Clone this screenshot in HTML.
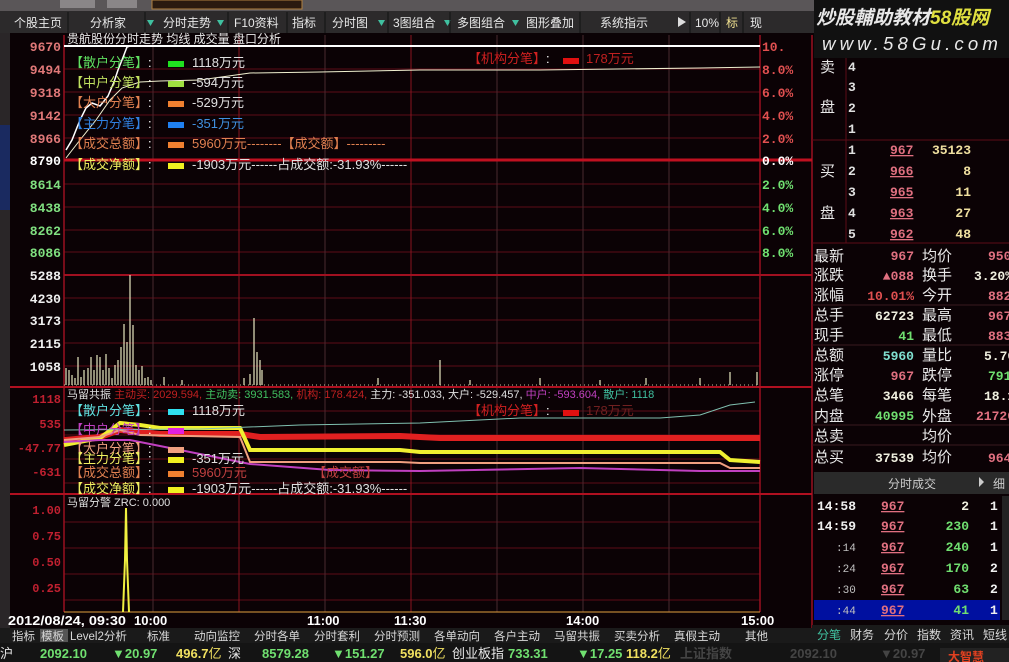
<!DOCTYPE html>
<html><head><meta charset="utf-8"><style>
html,body{margin:0;padding:0;background:#0b0205;width:1009px;height:662px;overflow:hidden}
svg{display:block;font-family:"Liberation Sans","Noto Sans CJK SC",sans-serif}
.m{font-family:"Liberation Mono","Noto Sans CJK SC",monospace}
</style></head><body>
<svg width="1009" height="662" viewBox="0 0 1009 662" xmlns="http://www.w3.org/2000/svg">
<rect width="1009" height="662" fill="#0b0205"/>
<rect x="0" y="0" width="820" height="11" fill="#5a5658"/>
<rect x="60" y="0" width="35" height="8" fill="#8a8688"/>
<rect x="107" y="0" width="30" height="8" fill="#8a8688"/>
<rect x="152" y="0" width="150" height="9" fill="#2a1a10" stroke="#b08040"/>
<rect x="0" y="11" width="820" height="22" fill="#2c2a2b"/>
<g font-size="12" fill="#e8e8e8">
<text x="14" y="27">个股主页</text><text x="90" y="27">分析家</text>
<text x="163" y="27">分时走势</text><text x="234" y="27">F10资料</text>
<text x="292" y="27">指标</text><text x="332" y="27">分时图</text>
<text x="393" y="27">3图组合</text><text x="457" y="27">多图组合</text>
<text x="526" y="27">图形叠加</text><text x="600" y="27">系统指示</text>
<text x="695" y="27">10%</text><text x="726" y="27" fill="#f0e090">标</text><text x="750" y="27">现</text>
</g>
<g fill="#40c0a0"><path d="M147 20h7l-3.5 6z"/><path d="M217 20h7l-3.5 6z"/><path d="M378 20h7l-3.5 6z"/><path d="M444 20h7l-3.5 6z"/><path d="M512 20h7l-3.5 6z"/></g>
<path d="M678 17v10l8-5z" fill="#ddd"/>
<g stroke="#111"><line x1="68" y1="12" x2="68" y2="33"/><line x1="145" y1="12" x2="145" y2="33"/><line x1="228" y1="12" x2="228" y2="33"/><line x1="287" y1="12" x2="287" y2="33"/><line x1="325" y1="12" x2="325" y2="33"/><line x1="388" y1="12" x2="388" y2="33"/><line x1="450" y1="12" x2="450" y2="33"/><line x1="580" y1="12" x2="580" y2="33"/><line x1="690" y1="12" x2="690" y2="33"/><line x1="720" y1="12" x2="720" y2="33"/><line x1="743" y1="12" x2="743" y2="33"/></g>
<rect x="0" y="33" width="10" height="600" fill="#2a2628"/>
<rect x="0" y="125" width="10" height="85" fill="#1a2a60"/>
<rect x="814" y="0" width="195" height="58" fill="#111"/>
<text x="816" y="24" font-size="19" font-style="italic" fill="#e8e8e8" font-weight="bold">炒股輔助教材<tspan fill="#e0e040">58股网</tspan></text>
<text x="822" y="50" font-size="18" font-style="italic" fill="#e8e8e8" letter-spacing="4" textLength="180" lengthAdjust="spacingAndGlyphs">www.58Gu.com</text>
<g stroke="#5c0c18" stroke-width="1">
<line x1="64" y1="69" x2="760" y2="69"/><line x1="64" y1="92" x2="760" y2="92"/><line x1="64" y1="115" x2="760" y2="115"/><line x1="64" y1="138" x2="760" y2="138"/>
<line x1="64" y1="184" x2="760" y2="184"/><line x1="64" y1="207" x2="760" y2="207"/><line x1="64" y1="230" x2="760" y2="230"/><line x1="64" y1="252" x2="760" y2="252"/>
<line x1="64" y1="298" x2="760" y2="298"/><line x1="64" y1="320" x2="760" y2="320"/><line x1="64" y1="343" x2="760" y2="343"/><line x1="64" y1="366" x2="760" y2="366"/>
<line x1="64" y1="411" x2="760" y2="411"/><line x1="64" y1="435" x2="760" y2="435"/><line x1="64" y1="459" x2="760" y2="459"/><line x1="64" y1="483" x2="760" y2="483"/>
<line x1="64" y1="522" x2="760" y2="522"/><line x1="64" y1="548" x2="760" y2="548"/><line x1="64" y1="574" x2="760" y2="574"/><line x1="64" y1="600" x2="760" y2="600"/>
</g>
<g stroke="#4a2a30"><line x1="153" y1="35" x2="153" y2="612"/><line x1="325" y1="35" x2="325" y2="612"/><line x1="497" y1="35" x2="497" y2="612"/><line x1="583" y1="35" x2="583" y2="612"/><line x1="669" y1="35" x2="669" y2="612"/></g>
<g stroke="#8a1420"><line x1="239" y1="35" x2="239" y2="612"/><line x1="411" y1="35" x2="411" y2="612"/></g>
<g stroke="#9a1020" stroke-width="1.5"><line x1="64" y1="35" x2="64" y2="612"/><line x1="760" y1="35" x2="760" y2="612"/><line x1="812" y1="35" x2="812" y2="662"/></g>
<line x1="64" y1="160" x2="812" y2="160" stroke="#c01020" stroke-width="3"/>
<line x1="64" y1="275" x2="812" y2="275" stroke="#a01020" stroke-width="2"/>
<line x1="10" y1="387" x2="812" y2="387" stroke="#b01020" stroke-width="2"/>
<line x1="10" y1="494" x2="812" y2="494" stroke="#b01020" stroke-width="2"/>
<line x1="64" y1="612" x2="760" y2="612" stroke="#e0a040"/>
<g font-size="13" font-weight="bold" text-anchor="end" class="m">
<g fill="#e07878"><text x="61" y="51">9670</text><text x="61" y="74">9494</text><text x="61" y="97">9318</text><text x="61" y="120">9142</text><text x="61" y="143">8966</text></g>
<text x="61" y="165" fill="#fff">8790</text>
<g fill="#80e080"><text x="61" y="189">8614</text><text x="61" y="212">8438</text><text x="61" y="235">8262</text><text x="61" y="257">8086</text></g>
<g fill="#f0f0f0"><text x="61" y="280">5288</text><text x="61" y="303">4230</text><text x="61" y="325">3173</text><text x="61" y="348">2115</text><text x="61" y="371">1058</text></g>
<g fill="#c02030" font-size="12"><text x="61" y="403">1118</text><text x="61" y="428">535</text><text x="61" y="452">-47.77</text><text x="61" y="476">-631</text><text x="61" y="514">1.00</text><text x="61" y="540">0.75</text><text x="61" y="566">0.50</text><text x="61" y="592">0.25</text></g>
</g>
<g font-size="13" font-weight="bold" class="m">
<g fill="#e05050"><text x="762" y="51">10.</text><text x="762" y="74">8.0%</text><text x="762" y="97">6.0%</text><text x="762" y="120">4.0%</text><text x="762" y="143">2.0%</text></g>
<text x="762" y="165" fill="#fff">0.0%</text>
<g fill="#70e070"><text x="762" y="189">2.0%</text><text x="762" y="212">4.0%</text><text x="762" y="235">6.0%</text><text x="762" y="257">8.0%</text></g>
</g>
<line x1="64" y1="46" x2="760" y2="46" stroke="#fff" stroke-width="2"/>
<polyline fill="none" stroke="#fff" stroke-width="1.5" points="66,150 72,140 80,120 86,108 92,103 100,106 108,96 114,82 118,70 122,60 127,47 130,46"/>
<polyline fill="none" stroke="#f0f0d0" stroke-width="1" points="66,158 80,140 96,120 110,100 122,88 140,82 160,81 200,80 250,73 320,72 420,70 540,70 700,68 760,67"/>
<g stroke="#e8e8c0" stroke-width="1.2">
<line x1="66" y1="385" x2="66" y2="368"/><line x1="69" y1="385" x2="69" y2="370"/><line x1="72" y1="385" x2="72" y2="375"/><line x1="75" y1="385" x2="75" y2="378"/><line x1="78" y1="385" x2="78" y2="357"/><line x1="81" y1="385" x2="81" y2="377"/><line x1="84" y1="385" x2="84" y2="370"/><line x1="88" y1="385" x2="88" y2="368"/><line x1="91" y1="385" x2="91" y2="357"/><line x1="94" y1="385" x2="94" y2="370"/><line x1="97" y1="385" x2="97" y2="355"/><line x1="100" y1="385" x2="100" y2="357"/><line x1="103" y1="385" x2="103" y2="370"/><line x1="106" y1="385" x2="106" y2="354"/><line x1="109" y1="385" x2="109" y2="368"/><line x1="112" y1="385" x2="112" y2="378"/><line x1="115" y1="385" x2="115" y2="365"/><line x1="118" y1="385" x2="118" y2="360"/><line x1="121" y1="385" x2="121" y2="347"/><line x1="124" y1="385" x2="124" y2="324"/><line x1="127" y1="385" x2="127" y2="342"/><line x1="130" y1="385" x2="130" y2="275"/><line x1="133" y1="385" x2="133" y2="325"/><line x1="136" y1="385" x2="136" y2="365"/><line x1="139" y1="385" x2="139" y2="370"/><line x1="142" y1="385" x2="142" y2="366"/><line x1="145" y1="385" x2="145" y2="378"/><line x1="148" y1="385" x2="148" y2="377"/><line x1="151" y1="385" x2="151" y2="380"/><line x1="164" y1="385" x2="164" y2="377"/><line x1="182" y1="385" x2="182" y2="380"/><line x1="250" y1="385" x2="250" y2="374"/><line x1="254" y1="385" x2="254" y2="318"/><line x1="257" y1="385" x2="257" y2="352"/><line x1="260" y1="385" x2="260" y2="360"/><line x1="262" y1="385" x2="262" y2="370"/><line x1="244" y1="385" x2="244" y2="378"/><line x1="378" y1="385" x2="378" y2="378"/><line x1="440" y1="385" x2="440" y2="360"/><line x1="470" y1="385" x2="470" y2="380"/><line x1="540" y1="385" x2="540" y2="378"/><line x1="600" y1="385" x2="600" y2="380"/><line x1="646" y1="385" x2="646" y2="378"/><line x1="700" y1="385" x2="700" y2="378"/><line x1="730" y1="385" x2="730" y2="372"/><line x1="757" y1="385" x2="757" y2="372"/>
</g>
<line x1="64" y1="385" x2="760" y2="385" stroke="#c0c0a0" stroke-dasharray="1,3"/>
<text x="67" y="43" font-size="12" fill="#e8e8e8">贵航股份分时走势 均线 成交量 盘口分析</text>
<g font-size="13">
<text x="70" y="67" fill="#60e060">【散户分笔】<tspan fill="#fff">:</tspan></text><rect x="168" y="61" width="16" height="6" fill="#20e020"/><text x="192" y="67" fill="#e0e0e0">1118万元</text>
<text x="70" y="87" fill="#c0e060">【中户分笔】<tspan fill="#fff">:</tspan></text><rect x="168" y="81" width="16" height="6" fill="#a0e040"/><text x="192" y="87" fill="#e0e0e0">-594万元</text>
<text x="70" y="107" fill="#e08050">【大户分笔】<tspan fill="#fff">:</tspan></text><rect x="168" y="101" width="16" height="6" fill="#f08030"/><text x="192" y="107" fill="#e0e0e0">-529万元</text>
<text x="70" y="128" fill="#3080e0">【主力分笔】<tspan fill="#fff">:</tspan></text><rect x="168" y="122" width="16" height="6" fill="#2080f0"/><text x="192" y="128" fill="#4090e0">-351万元</text>
<text x="70" y="148" fill="#e08050">【成交总额】<tspan fill="#fff">:</tspan></text><rect x="168" y="142" width="16" height="6" fill="#f08030"/><text x="192" y="148" fill="#e08050">5960万元--------【成交额】---------</text>
<text x="70" y="169" fill="#f0f060">【成交净额】<tspan fill="#fff">:</tspan></text><rect x="168" y="163" width="16" height="6" fill="#f0f020"/><text x="192" y="169" fill="#e0e0e0">-1903万元------占成交额:-31.93%------</text>
<text x="468" y="63" fill="#d02020">【机构分笔】<tspan fill="#fff">:</tspan></text><rect x="563" y="58" width="16" height="6" fill="#e01010"/><text x="586" y="63" fill="#c02020">178万元</text>
</g>
<text x="67" y="398" font-size="11" fill="#e0e0e0">马留共振 <tspan fill="#c02020">主动买: 2029.594,</tspan> <tspan fill="#40c060">主动卖: 3931.583,</tspan> <tspan fill="#c02020">机构: 178.424,</tspan> 主力: -351.033, 大户: -529.457, <tspan fill="#c040c0">中户: -593.604,</tspan> <tspan fill="#40c0a0">散户: 1118</tspan></text>
<polyline fill="none" stroke="#e02020" stroke-width="6" points="64,440 100,437 120,430 140,432 160,434 200,434 240,434 260,437 400,436 420,437 440,438 760,438"/>
<polyline fill="none" stroke="#f0f030" stroke-width="4" points="64,445 100,438 120,423 140,425 160,428 240,428 250,450 400,450 420,452 720,452 730,460 760,462"/>
<polyline fill="none" stroke="#f0a080" stroke-width="2" points="64,440 100,437 120,430 140,435 240,437 250,462 400,462 420,463 720,463 730,468 760,468"/>
<polyline fill="none" stroke="#c040c0" stroke-width="2" points="64,442 100,440 130,440 160,446 250,464 330,470 420,471 580,468 700,471 760,471"/>
<polyline fill="none" stroke="#80c0b0" stroke-width="1" points="64,430 200,429 300,425 420,423 520,418 660,418 700,415 730,405 755,402"/>
<g font-size="13">
<text x="70" y="415" fill="#60e0e0">【散户分笔】<tspan fill="#fff">:</tspan></text><rect x="168" y="409" width="16" height="6" fill="#30e0f0"/><text x="192" y="415" fill="#e0e0e0">1118万元</text>
<text x="70" y="434" fill="#c040c0">【中户分笔】<tspan fill="#fff">:</tspan></text><rect x="168" y="428" width="16" height="6" fill="#e020e0"/>
<text x="70" y="453" fill="#f0a080">【大户分笔】<tspan fill="#fff">:</tspan></text><rect x="168" y="447" width="16" height="6" fill="#f0a080"/>
<text x="70" y="463" fill="#f0f060">【主力分笔】<tspan fill="#fff">:</tspan></text><rect x="168" y="457" width="16" height="6" fill="#f0f020"/><text x="192" y="463" fill="#e0e0e0">-351万元</text>
<text x="70" y="477" fill="#e08050">【成交总额】<tspan fill="#fff">:</tspan></text><rect x="168" y="471" width="16" height="6" fill="#f08030"/><text x="192" y="477" fill="#c04040">5960万元</text><text x="313" y="477" fill="#c04040">【成交额】</text>
<text x="70" y="493" fill="#f0f060">【成交净额】<tspan fill="#fff">:</tspan></text><rect x="168" y="487" width="16" height="6" fill="#f0f020"/><text x="192" y="493" fill="#e0e0e0">-1903万元------占成交额:-31.93%------</text>
<text x="468" y="415" fill="#d02020">【机构分笔】<tspan fill="#fff">:</tspan></text><rect x="563" y="410" width="16" height="6" fill="#e01010"/><text x="586" y="415" fill="#702020">178万元</text>
</g>
<text x="67" y="506" font-size="11" fill="#e0e0e0">马留分警 ZRC: 0.000</text>
<polyline fill="none" stroke="#f0f040" stroke-width="2" points="123,612 125,560 126,508 127,560 129,612"/>
<g font-size="13" font-weight="bold" fill="#fff">
<text x="8" y="625" font-size="12.5" textLength="118" lengthAdjust="spacingAndGlyphs">2012/08/24, 09:30</text><text x="134" y="625">10:00</text><text x="307" y="625">11:00</text><text x="394" y="625">11:30</text><text x="566" y="625">14:00</text><text x="741" y="625">15:00</text>
</g>
<rect x="0" y="628" width="812" height="15" fill="#1a1a1a"/>
<rect x="40" y="629" width="28" height="13" fill="#555"/>
<g font-size="11.5" fill="#d8d8d8">
<text x="12" y="640">指标</text><text x="41" y="640">模板</text><text x="70" y="640">Level2分析</text><text x="147" y="640">标准</text><text x="194" y="640">动向监控</text><text x="254" y="640">分时各单</text><text x="314" y="640">分时套利</text><text x="374" y="640">分时预测</text><text x="434" y="640">各单动向</text><text x="494" y="640">各户主动</text><text x="554" y="640">马留共振</text><text x="614" y="640">买卖分析</text><text x="674" y="640">真假主动</text><text x="745" y="640">其他</text>
</g>
<rect x="0" y="643" width="1009" height="19" fill="#141414"/>
<g font-size="13" font-weight="bold">
<text x="0" y="658" fill="#e8e8e8" font-weight="normal">沪</text>
<text x="40" y="658" fill="#70e070">2092.10</text><text x="112" y="658" fill="#70e070">▼20.97</text><text x="176" y="658" fill="#f0e060">496.7<tspan font-weight="normal">亿</tspan></text><text x="228" y="658" fill="#e8e8e8" font-weight="normal">深</text>
<text x="262" y="658" fill="#70e070">8579.28</text><text x="332" y="658" fill="#70e070">▼151.27</text><text x="400" y="658" fill="#f0e060">596.0<tspan font-weight="normal">亿</tspan></text><text x="452" y="658" fill="#e8e8e8" font-weight="normal">创业板指</text>
<text x="508" y="658" fill="#70e070">733.31</text><text x="577" y="658" fill="#70e070">▼17.25</text><text x="626" y="658" fill="#f0e060">118.2<tspan font-weight="normal">亿</tspan></text>
<text x="680" y="658" fill="#444">上证指数</text><text x="790" y="658" fill="#444">2092.10</text><text x="880" y="658" fill="#444">▼20.97</text>
</g>
<rect x="940" y="648" width="69" height="14" fill="#222"/><text x="948" y="661" font-size="12" fill="#e04020" font-weight="bold">大智慧</text>
<g stroke="#5c0c18"><line x1="846" y1="58" x2="846" y2="243"/><line x1="812" y1="140" x2="1009" y2="140"/><line x1="812" y1="243" x2="1009" y2="243"/></g>
<g font-size="15" fill="#e8e8e8"><text x="820" y="72">卖</text><text x="820" y="112">盘</text><text x="820" y="176">买</text><text x="820" y="218">盘</text></g>
<g font-size="13" font-weight="bold" class="m">
<g fill="#e0e0e0"><text x="848" y="71">4</text><text x="848" y="91">3</text><text x="848" y="112">2</text><text x="848" y="133">1</text><text x="848" y="154">1</text><text x="848" y="175">2</text><text x="848" y="196">3</text><text x="848" y="217">4</text><text x="848" y="238">5</text></g>
<g fill="#e07080" text-decoration="underline"><text x="890" y="154">967</text><text x="890" y="175">966</text><text x="890" y="196">965</text><text x="890" y="217">963</text><text x="890" y="238">962</text></g>
<g fill="#f0e0a0" text-anchor="end"><text x="971" y="154">35123</text><text x="971" y="175">8</text><text x="971" y="196">11</text><text x="971" y="217">27</text><text x="971" y="238">48</text></g>
</g>
<g font-size="15" fill="#e8e8e8">
<text x="814" y="261">最新</text><text x="814" y="280">涨跌</text><text x="814" y="300">涨幅</text><text x="814" y="320">总手</text><text x="814" y="340">现手</text><text x="814" y="360">总额</text><text x="814" y="380">涨停</text><text x="814" y="400">总笔</text><text x="814" y="421">内盘</text><text x="814" y="441">总卖</text><text x="814" y="462">总买</text>
<text x="922" y="261">均价</text><text x="922" y="280">换手</text><text x="922" y="300">今开</text><text x="922" y="320">最高</text><text x="922" y="340">最低</text><text x="922" y="360">量比</text><text x="922" y="380">跌停</text><text x="922" y="400">每笔</text><text x="922" y="421">外盘</text><text x="922" y="441">均价</text><text x="922" y="462">均价</text>
</g>
<g font-size="13" font-weight="bold" class="m" text-anchor="end">
<text x="914" y="260" fill="#e07080">967</text><text x="914" y="280" fill="#e07080">▲088</text><text x="914" y="300" fill="#e05050">10.01%</text><text x="914" y="320" fill="#f0f0e0">62723</text><text x="914" y="340" fill="#70e070">41</text><text x="914" y="360" fill="#80e0d0">5960</text><text x="914" y="380" fill="#e07080">967</text><text x="914" y="400" fill="#f0f0e0">3466</text><text x="914" y="420" fill="#70e070">40995</text><text x="914" y="462" fill="#f0f0e0">37539</text>
</g>
<g font-size="13" font-weight="bold" class="m">
<text x="988" y="260" fill="#e07080">950</text><text x="974" y="280" fill="#f0f0e0">3.20%</text><text x="988" y="300" fill="#e07080">882</text><text x="988" y="320" fill="#e07080">967</text><text x="988" y="340" fill="#e07080">883</text><text x="984" y="360" fill="#f0f0e0">5.76</text><text x="988" y="380" fill="#70e070">791</text><text x="984" y="400" fill="#f0f0e0">18.1</text><text x="976" y="420" fill="#e07080">21726</text><text x="988" y="462" fill="#e07080">964</text>
</g>
<g stroke="#3a1a20"><line x1="812" y1="305" x2="1009" y2="305"/><line x1="812" y1="345" x2="1009" y2="345"/><line x1="812" y1="425" x2="1009" y2="425"/><line x1="812" y1="445" x2="1009" y2="445"/></g>
<rect x="814" y="472" width="195" height="22" fill="#2a2a2a"/>
<text x="888" y="488" font-size="12" fill="#ccc">分时成交</text><path d="M979 477v10l5-5z" fill="#ccc"/><text x="993" y="488" font-size="12" fill="#ccc">细</text>
<rect x="814" y="600" width="186" height="20" fill="#0010a0"/>
<g font-size="13" font-weight="bold" class="m">
<g fill="#f0f0f0"><text x="817" y="510">14:58</text><text x="817" y="530">14:59</text></g>
<g fill="#c0c0c0" font-size="11" font-weight="normal"><text x="836" y="551">:14</text><text x="836" y="572">:24</text><text x="836" y="593">:30</text><text x="836" y="614">:44</text></g>
<g fill="#e07080" text-decoration="underline"><text x="881" y="510">967</text><text x="881" y="530">967</text><text x="881" y="551">967</text><text x="881" y="572">967</text><text x="881" y="593">967</text><text x="881" y="614">967</text></g>
<g text-anchor="end"><text x="969" y="510" fill="#f0f0e0">2</text><text x="969" y="530" fill="#70e070">230</text><text x="969" y="551" fill="#70e070">240</text><text x="969" y="572" fill="#70e070">170</text><text x="969" y="593" fill="#70e070">63</text><text x="969" y="614" fill="#70e070">41</text></g>
<g fill="#f0f0f0"><text x="990" y="510">1</text><text x="990" y="530">1</text><text x="990" y="551">1</text><text x="990" y="572">2</text><text x="990" y="593">2</text><text x="990" y="614">1</text></g>
</g>
<rect x="1002" y="496" width="7" height="124" fill="#222"/>
<rect x="812" y="625" width="197" height="18" fill="#1a1a1a"/>
<g font-size="12" fill="#d8d8d8"><text x="817" y="639" fill="#40c0a0">分笔</text><text x="850" y="639">财务</text><text x="884" y="639">分价</text><text x="917" y="639">指数</text><text x="950" y="639">资讯</text><text x="983" y="639">短线</text></g>
</svg>
</body></html>
